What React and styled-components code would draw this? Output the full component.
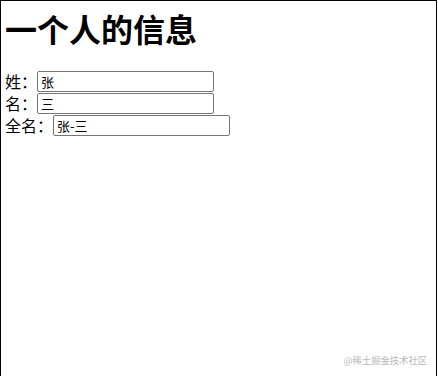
import styled, { createGlobalStyle } from "styled-components";

const GlobalStyle = createGlobalStyle`
  body {
    margin: 0;
    background: #fff;
  }
`;

const Frame = styled.div`
  position: relative;
  box-sizing: border-box;
  width: 437px;
  height: 376px;
  border: 1px solid #000;
  border-bottom: none;
  padding: 0 4px;
  font-family: "Noto Sans CJK SC", "Noto Sans", sans-serif;
  color: #000;
`;

const Title = styled.h1`
  margin: 4px 0 0;
  height: 65px;
  font-size: 32px;
  line-height: 46px;
  font-weight: 700;
`;

const Row = styled.div`
  display: flex;
  align-items: center;
  height: 22px;
  font-size: 16px;
`;

const Label = styled.span`
  line-height: 22px;
`;

const Field = styled.input`
  box-sizing: border-box;
  width: 177px;
  height: 21px;
  margin: 0;
  padding: 1px 3px;
  border: 1px solid #767676;
  border-radius: 2px;
  font-family: "Noto Sans CJK SC", sans-serif;
  font-size: 13px;
  color: #000;
  background: #fff;
`;

const Watermark = styled.div`
  position: absolute;
  right: 9px;
  bottom: 9px;
  font-size: 9.3px;
  color: #b8b8b8;
  font-family: "Noto Sans CJK SC", sans-serif;
`;

const App = () => {
  return (
    <>
      <GlobalStyle />
      <Frame>
        <Title>一个人的信息</Title>
        <Row>
          <Label>姓：</Label>
          <Field defaultValue="张" />
        </Row>
        <Row>
          <Label>名：</Label>
          <Field defaultValue="三" />
        </Row>
        <Row>
          <Label>全名：</Label>
          <Field defaultValue="张-三" />
        </Row>
        <Watermark>@稀土掘金技术社区</Watermark>
      </Frame>
    </>
  );
};

export default App;
